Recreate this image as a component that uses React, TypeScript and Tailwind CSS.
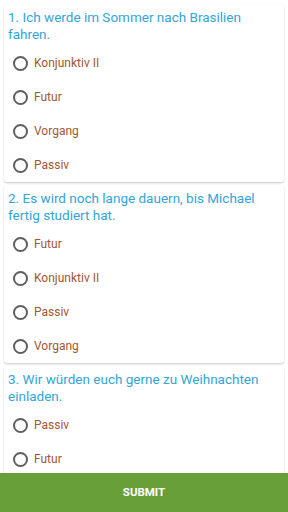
const questions = [
  {
    text: '1. Ich werde im Sommer nach Brasilien fahren.',
    options: ['Konjunktiv II', 'Futur', 'Vorgang', 'Passiv'],
  },
  {
    text: '2. Es wird noch lange dauern, bis Michael fertig studiert hat.',
    options: ['Futur', 'Konjunktiv II', 'Passiv', 'Vorgang'],
  },
  {
    text: '3. Wir würden euch gerne zu Weihnachten einladen.',
    options: ['Passiv', 'Futur', 'Vorgang', 'Konjunktiv II'],
  },
];

function Radio() {
  return <span className="block h-[15px] w-[15px] shrink-0 rounded-full border-2 border-[#5f5f5f]" />;
}

export default function App() {
  return (
    <div
      className="flex h-[512px] w-[288px] flex-col bg-white"
      style={{ fontFamily: 'Roboto, "Liberation Sans", sans-serif' }}
    >
      <div className="flex flex-1 flex-col gap-[3px] overflow-hidden px-[4px] pt-[4px]">
        {questions.map(q => (
          <div
            key={q.text}
            className="shrink-0 rounded-[3px] bg-white px-[4px] pt-[5px] shadow-[0_1px_2px_rgba(0,0,0,0.22)]"
          >
            <p className="text-[13.5px] leading-[17px] text-[#33a5d8]">{q.text}</p>
            <div className="mt-[3px]">
              {q.options.map(o => (
                <div key={o} className="flex h-[34px] items-center gap-[6px] pl-[5px]">
                  <Radio />
                  <span className="text-[12px] text-[#a4572f]">{o}</span>
                </div>
              ))}
            </div>
          </div>
        ))}
      </div>
      <button className="flex h-[39px] w-full shrink-0 items-center justify-center bg-[#689f38] text-[11.5px] font-bold text-white">
        SUBMIT
      </button>
    </div>
  );
}
